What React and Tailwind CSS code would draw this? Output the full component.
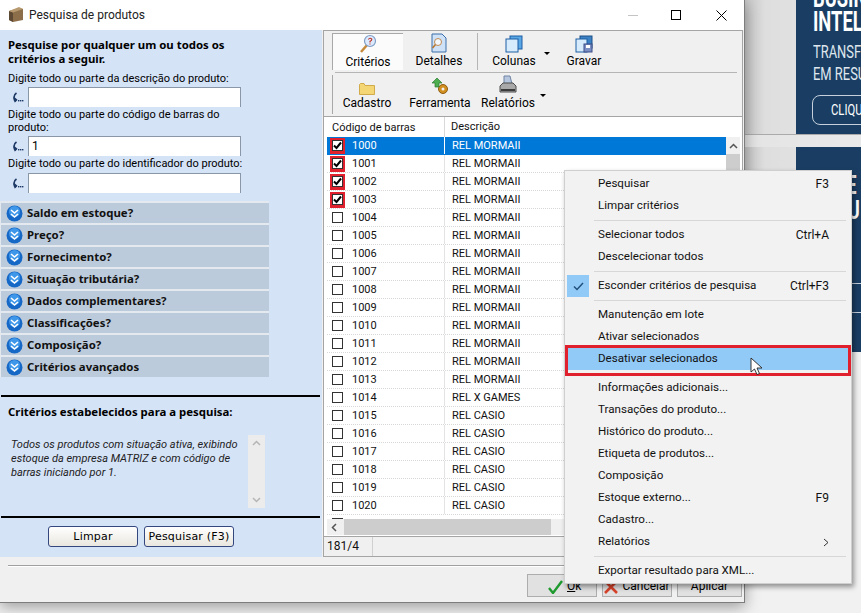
import React from 'react'

const sections = ['Saldo em estoque?', 'Preço?', 'Fornecimento?', 'Situação tributária?', 'Dados complementares?', 'Classificações?', 'Composição?', 'Critérios avançados']

const rows = []
for (let i = 0; i <= 20; i++) {
  let desc = 'REL MORMAII'
  if (i === 14) desc = 'REL X GAMES'
  if (i > 14) desc = 'REL CASIO'
  rows.push({ code: String(1000 + i), desc, checked: i < 4, selected: i === 0 })
}

const menu = [
  { label: 'Pesquisar', key: 'F3' },
  { label: 'Limpar critérios' },
  { sep: true },
  { label: 'Selecionar todos', key: 'Ctrl+A' },
  { label: 'Descelecionar todos' },
  { sep: true },
  { label: 'Esconder critérios de pesquisa', key: 'Ctrl+F3', checked: true },
  { sep: true },
  { label: 'Manutenção em lote' },
  { label: 'Ativar selecionados' },
  { label: 'Desativar selecionados', active: true },
  { sep: true },
  { label: 'Informações adicionais...' },
  { label: 'Transações do produto...' },
  { label: 'Histórico do produto...' },
  { label: 'Etiqueta de produtos...' },
  { label: 'Composição' },
  { label: 'Estoque externo...', key: 'F9' },
  { label: 'Cadastro...' },
  { label: 'Relatórios', arrow: true },
  { sep: true },
  { label: 'Exportar resultado para XML...' },
]

function SearchGlyph() {
  return (
    <svg width="12" height="11" viewBox="0 0 12 11" className="shrink-0">
      <path d="M4.5 1 C1.5 3 1.5 6.5 3.5 10 M1.5 5.5 L5 8.5" fill="none" stroke="#1d3a66" strokeWidth="1.7" />
      <rect x="6" y="8" width="1.4" height="1.4" fill="#1d3a66" />
      <rect x="8" y="8" width="1.4" height="1.4" fill="#1d3a66" />
      <rect x="10" y="8" width="1.4" height="1.4" fill="#1d3a66" />
    </svg>
  )
}

function SearchField({ value }) {
  return (
    <div className="flex items-center h-5">
      <div className="w-[28px] pl-[12px]"><SearchGlyph /></div>
      <div className="w-[213px] h-5 bg-white border-x border-t border-[#8a97a8] pl-[3px] text-[12px] leading-[19px] text-black">{value}</div>
    </div>
  )
}

function SectionIcon() {
  return (
    <svg width="17" height="17" viewBox="0 0 17 17" className="shrink-0">
      <circle cx="8.5" cy="8.5" r="8" fill="#1668c7" />
      <circle cx="8.5" cy="6.5" r="5.5" fill="#3f97ea" />
      <path d="M5 5 L8.5 8 L12 5 M5 9 L8.5 12 L12 9" fill="none" stroke="#fff" strokeWidth="1.6" />
    </svg>
  )
}

function FormButton({ children }) {
  return (
    <button className="w-[90px] h-[21px] rounded-[3px] border border-[#34477f] bg-gradient-to-b from-white to-[#e9e7df] font-['DejaVu_Sans',sans-serif] text-[11px] leading-[19px] tracking-[0.2px] text-black">
      {children}
    </button>
  )
}

function CriteriaIcon() {
  return (
    <svg width="20" height="20" viewBox="0 0 20 20">
      <path d="M9 11 L3 18" stroke="#c68a3c" strokeWidth="2.5" />
      <circle cx="12" cy="7" r="5.5" fill="#dbeafe" stroke="#7f9cc4" strokeWidth="1.2" />
      <path d="M10.3 5.5 Q12 3.2 13.8 5.2 Q13.8 6.6 12 7.4 L12 8.4 M12 9.4 L12 10.4" fill="none" stroke="#c0392b" strokeWidth="1.2" />
    </svg>
  )
}

function DetailsIcon() {
  return (
    <svg width="20" height="20" viewBox="0 0 20 20">
      <path d="M3 1 H13 L17 5 V19 H3 Z" fill="#cfe1f7" stroke="#3a6ea8" />
      <circle cx="9" cy="9" r="3.5" fill="#f2f7fd" stroke="#c18a4e" />
      <path d="M6.5 11.5 L3.5 15" stroke="#b9772f" strokeWidth="1.6" />
    </svg>
  )
}

function ColumnsIcon() {
  return (
    <svg width="18" height="18" viewBox="0 0 18 18">
      <rect x="5" y="1" width="12" height="13" fill="#5aa7e6" stroke="#1d5fa4" />
      <rect x="1" y="4" width="12" height="13" fill="#d6ebfb" stroke="#1d5fa4" />
    </svg>
  )
}

function SaveIcon() {
  return (
    <svg width="18" height="18" viewBox="0 0 18 18">
      <rect x="5" y="1" width="12" height="12" fill="#3d82c4" stroke="#1d4f86" />
      <rect x="1" y="4" width="11" height="13" fill="#d6ebfb" stroke="#1d5fa4" />
      <rect x="9" y="9" width="8" height="8" fill="#7b8fc4" stroke="#3b4d88" />
      <rect x="11" y="10" width="4" height="3" fill="#fff" />
    </svg>
  )
}

function FolderIcon() {
  return (
    <svg width="16" height="12" viewBox="0 0 16 12">
      <path d="M0.5 1.5 V11.5 H15.5 V2.5 H6 L5 0.5 H1.5 Z" fill="#f4d675" stroke="#d1ab4b" />
    </svg>
  )
}

function ToolIcon() {
  return (
    <svg width="18" height="18" viewBox="0 0 18 18">
      <circle cx="12" cy="12" r="4.5" fill="#d18f1f" stroke="#8f5d12" />
      <circle cx="12" cy="12" r="1.5" fill="#f0f0f0" />
      <path d="M1 6 L6 1 L11 6 L8 6 L8 10 L4 10 L4 6 Z" fill="#4cae4f" stroke="#2b7a30" strokeWidth="0.7" />
    </svg>
  )
}

function PrinterIcon() {
  return (
    <svg width="18" height="20" viewBox="0 0 18 20">
      <path d="M5 1 H11 L13 9 H5 Z" fill="#b6c6de" stroke="#6f83a3" />
      <path d="M1 11 L4 8 H14 L17 11 V17 H1 Z" fill="#a9a9a9" stroke="#4d4d4d" />
      <rect x="2" y="14" width="14" height="2" fill="#3b3b3b" />
    </svg>
  )
}

function ToolButton({ icon, label, className }) {
  return (
    <div className={`flex flex-col items-center h-[37px] ${className}`}>
      <div className="h-[20px] flex items-end justify-center">{icon}</div>
      <span className="mt-px text-[12px] leading-[15px] text-black whitespace-nowrap">{label}</span>
    </div>
  )
}

function DropArrow({ className }) {
  return <span className={`w-0 h-0 border-x-[3px] border-x-transparent border-t-[3px] border-t-black ${className}`} />
}

function TableCheck({ checked }) {
  return (
    <div className={`w-[15px] h-[16px] flex items-center justify-center ${checked ? 'bg-[#e0202c]' : ''}`}>
      <div className="w-[11px] h-[11px] bg-white border border-[#333] flex items-center justify-center">
        {checked && (
          <svg width="9" height="9" viewBox="0 0 9 9">
            <path d="M1 4.5 L3.5 7 L8 1.5" fill="none" stroke="#000" strokeWidth="2" />
          </svg>
        )}
      </div>
    </div>
  )
}

export default function App() {
  return (
    <div className="relative w-[861px] h-[613px] overflow-hidden flex bg-[#f1f1f1] font-['Roboto',sans-serif]">
      <div className="w-[745px] h-[603px] shrink-0 flex flex-col bg-[#f0f0f0] border-r border-b border-[#7d7d7d] shadow-[0_4px_14px_rgba(0,0,0,0.35)] z-10">
        {/* title bar */}
        <div className="h-[30px] shrink-0 bg-white flex items-center">
          <svg width="16" height="17" viewBox="0 0 16 17" className="ml-[8px] -mt-[1px]">
            <path d="M1 5 L11 2 L15 3 V14 L5 16 L1 14 Z" fill="#8d6e4a" />
            <path d="M1 5 L5 6.5 V16 L1 14 Z" fill="#5e4a34" />
            <path d="M5 6.5 L15 3 L11 1 L1 5 Z" fill="#b89a70" />
          </svg>
          <span className="ml-[5px] text-[12px] text-[#222]">Pesquisa de produtos</span>
          <div className="ml-auto flex items-center">
            <span className="w-[10px] h-px bg-[#c4c4c4] mr-[33px]" />
            <span className="w-[10px] h-[10px] border border-black mr-[35px]" />
            <svg width="11" height="11" viewBox="0 0 11 11" className="mr-[17px]">
              <path d="M0.5 0.5 L10.5 10.5 M10.5 0.5 L0.5 10.5" stroke="#000" />
            </svg>
          </div>
        </div>

        <div className="flex h-[527px] shrink-0">
          {/* left panel */}
          <div className="w-[322px] shrink-0 bg-[#d5e3f7] flex flex-col text-black">
            <div className="pl-2 pt-2 text-[11.4px] leading-[14px] font-bold font-['Noto_Sans',sans-serif]">
              Pesquise por qualquer um ou todos os<br />critérios a seguir.
            </div>
            <div className="pl-2 mt-[6px] mb-px text-[11px] leading-[14px]">Digite todo ou parte da descrição do produto:</div>
            <SearchField />
            <div className="pl-2 pt-px mb-[2px] text-[11px] leading-[13px] w-[240px]">Digite todo ou parte do código de barras do produto:</div>
            <SearchField value="1" />
            <div className="pl-2 pt-px mb-[3px] text-[11px] leading-[13px]">Digite todo ou parte do identificador do produto:</div>
            <SearchField />

            <div className="mt-2 w-[269px] flex flex-col">
              {sections.map((s) => (
                <div key={s} className="h-[22px] bg-[#bccbdc] border-t-2 border-[#e4e9ef] border-l border-l-[#e4e9ef] flex items-center pl-[5px] gap-[4px]">
                  <SectionIcon />
                  <span className="-mt-px text-[11.4px] font-bold font-['Noto_Sans',sans-serif] text-[#111]">{s}</span>
                </div>
              ))}
            </div>

            <div className="mt-[18px] ml-px w-[319px] h-[2px] bg-black" />
            <div className="pl-2 mt-[8px] text-[11.4px] leading-[14px] font-bold font-['Noto_Sans',sans-serif]">Critérios estabelecidos para a pesquisa:</div>
            <div className="flex mt-[16px] h-[73px]">
              <p className="w-[248px] pl-[11px] pr-[6px] pt-[3px] text-[11px] leading-[14px] italic text-[#222]">
                Todos os produtos com situação ativa, exibindo estoque da empresa MATRIZ e com código de barras iniciando por 1.
              </p>
              <div className="w-[17px] bg-[#ececec] flex flex-col items-center justify-between py-[5px] text-[#b5b5b5]">
                <svg width="9" height="6" viewBox="0 0 9 6"><path d="M1 5 L4.5 1.5 L8 5" fill="none" stroke="currentColor" strokeWidth="1.5" /></svg>
                <svg width="9" height="6" viewBox="0 0 9 6"><path d="M1 1 L4.5 4.5 L8 1" fill="none" stroke="currentColor" strokeWidth="1.5" /></svg>
              </div>
            </div>
            <div className="mt-2 ml-px w-[319px] h-[2px] bg-black" />
            <div className="mt-[8px] pl-[48px] flex gap-[6px]">
              <FormButton>Limpar</FormButton>
              <FormButton>Pesquisar (F3)</FormButton>
            </div>
          </div>

          {/* right panel */}
          <div className="flex-1 flex flex-col ml-px mr-px min-w-0">
            <div className="h-[87px] shrink-0 border border-[#a5a5a5] bg-[#f0f0f0] pt-[2px] pl-[8px]">
              <div className="flex items-start h-[38px]">
                <ToolButton className="w-[71px] border-l border-t border-[#a8a8a8] bg-white/70" icon={<CriteriaIcon />} label="Critérios" />
                <ToolButton className="w-[72px]" icon={<DetailsIcon />} label="Detalhes" />
                <span className="w-px h-[37px] bg-[#b5b5b5] ml-[2px]" />
                <ToolButton className="w-[72px]" icon={<ColumnsIcon />} label="Colunas" />
                <DropArrow className="-ml-[6px] mt-[19px]" />
                <ToolButton className="w-[58px] ml-[5px]" icon={<SaveIcon />} label="Gravar" />
              </div>
              <div className="h-px bg-[#b5b5b5] ml-[3px] mr-[5px] mt-px" />
              <div className="flex items-start h-[39px] mt-[2px] border-l border-[#a8a8a8] pl-[3px]">
                <ToolButton className="w-[62px]" icon={<FolderIcon />} label="Cadastro" />
                <ToolButton className="w-[64px] ml-[10px]" icon={<ToolIcon />} label="Ferramenta" />
                <ToolButton className="w-[64px] ml-[4px]" icon={<PrinterIcon />} label="Relatórios" />
                <DropArrow className="mt-[19px]" />
              </div>
            </div>

            <div className="flex-1 min-h-0 bg-white border-x border-[#a5a5a5] pl-[3px] pr-[2px] flex flex-col text-[11px] text-[#111]">
              <div className="h-[20px] shrink-0 flex items-center">
                <span className="w-[118px] pl-[5px] pt-px border-r border-[#d9d9d9] leading-[20px]">Código de barras</span>
                <span className="pl-[6px] pt-px">Descrição</span>
              </div>
              <div className="flex h-[382px] shrink-0 overflow-hidden">
                <div className="w-[399px] shrink-0">
                  {rows.map((r) => (
                    <div key={r.code} className={`h-[18px] flex items-center border-b border-dotted ${r.selected ? 'bg-[#0078d7] text-white border-[#0078d7]' : 'border-[#d8d8d8]'}`}>
                      <div className={`w-[118px] h-full flex items-center pl-[3px] border-r ${r.selected ? 'border-white' : 'border-[#e3e3e3]'}`}>
                        <TableCheck checked={r.checked} />
                        <span className="ml-[7px] pt-[2px]">{r.code}</span>
                      </div>
                      <span className="pl-[7px] pt-[2px]">{r.desc}</span>
                    </div>
                  ))}
                  <div className="h-[5px] pl-[5px] pt-[3px]"><div className="w-[11px] h-[11px] border border-[#333]" /></div>
                </div>
                <div className="flex-1 bg-[#f0f0f0] flex flex-col">
                  <div className="h-[17px] flex items-center justify-center">
                    <svg width="9" height="6" viewBox="0 0 9 6"><path d="M1 5 L4.5 1.5 L8 5" fill="none" stroke="#555" strokeWidth="1.5" /></svg>
                  </div>
                  <div className="flex-1 bg-[#cdcdcd]" />
                </div>
              </div>
              <div className="h-[16px] shrink-0 bg-[#f0f0f0] flex items-center">
                <svg width="16" height="9" viewBox="0 0 16 9" className="shrink-0"><path d="M9 1 L5.5 4.5 L9 8" fill="none" stroke="#555" strokeWidth="1.5" /></svg>
                <div className="ml-px w-[207px] h-full bg-[#cdcdcd]" />
              </div>
            </div>

            <div className="h-[21px] shrink-0 border border-[#a5a5a5] bg-[#f0f0f0] flex text-[12px] leading-[19px] text-[#111]">
              <span className="w-[49px] pl-[3px] border-r border-[#d0d0d0]">181/4</span>
            </div>
          </div>
        </div>

        {/* bottom bar */}
        <div className="flex-1 flex flex-col">
          <div className="mt-[8px] ml-[8px] h-[2px] border-t border-[#a0a0a0] bg-white" />
          <div className="mt-[7px] pl-[527px] flex gap-[5px]">
            <button className="w-[70px] h-[23px] bg-[#e1e1e1] border border-[#adadad] flex items-center pl-[20px] text-[12px]">
              <svg width="15" height="14" viewBox="0 0 15 14" className="mt-[3px] mr-[4px]"><path d="M1 8 L5 13 L14 1" fill="none" stroke="#1e9a2f" strokeWidth="2.4" /></svg>
              <span className="underline">O</span>k
            </button>
            <button className="w-[70px] h-[23px] bg-[#e1e1e1] border border-[#adadad] flex items-center justify-center gap-1 text-[12px]">
              <svg width="14" height="14" viewBox="0 0 14 14" className="mt-[3px]"><path d="M1 1 L13 13 M13 1 L1 13" stroke="#d8432b" strokeWidth="2.6" /></svg>
              Cancelar
            </button>
            <button className="w-[65px] h-[23px] bg-[#e1e1e1] border border-[#adadad] flex items-center justify-center text-[12px]">Aplicar</button>
          </div>
        </div>
      </div>

      {/* page behind the window */}
      <div className="flex-1 flex flex-col">
        <div className="h-[134px] flex">
          <div className="w-[51px] bg-gradient-to-r from-[#c6c6c6] via-[#dedede] via-40% to-[#e1e1e1]" />
          <div className="flex-1 overflow-hidden bg-[#1a3e63] text-white pl-[17px] font-['Roboto',sans-serif] font-bold whitespace-nowrap">
            <div className="text-[27px] leading-[24px] -mt-[14px] w-[200px] origin-left scale-x-[0.68]">BUSINESS<br />INTELIGENCE</div>
            <div className="text-[19px] leading-[22px] mt-[7px] w-[200px] origin-left scale-x-[0.68] font-normal text-[#dfe6ee]">TRANSFORME<br />EM RESULTADO</div>
            <div className="mt-[10px] -ml-px w-[90px] h-[30px] border border-[#c5d0dc] rounded-[8px] pl-[18px] leading-[28px] text-[15px] font-normal">
              <div className="origin-left scale-x-[0.75]">CLIQUE</div>
            </div>
          </div>
        </div>
        <div className="h-[13px] border-t border-[#aaa] bg-gradient-to-r from-[#e4e4e4] to-[#f1f1f1]" />
        <div className="h-[205px] flex">
          <div className="w-[51px] bg-gradient-to-r from-[#c6c6c6] via-[#dedede] via-40% to-[#e1e1e1]" />
          <div className="flex-1 overflow-hidden bg-[#1a3e63] text-white font-['Roboto',sans-serif] font-bold whitespace-nowrap pl-[39px]">
            <div className="mt-[26px] text-[26px] leading-[25px] origin-left scale-x-[0.7]">TE<br />NU</div>
            <div className="mt-[8px] text-[17px] leading-[20px] font-normal origin-left scale-x-[0.7]">BA<br />EM</div>
            <div className="mt-[12px] border-y border-[#c5d0dc] h-[30px] text-[14px] leading-[28px] font-normal">IQ</div>
          </div>
        </div>
      </div>

      {/* context menu */}
      <div className="absolute z-20 left-[564px] top-[170px] w-[288px] h-[414px] pt-[2px] bg-[#f2f2f2] border border-[#cfcfcf] shadow-[2px_3px_5px_rgba(0,0,0,0.4)] text-[11.6px] text-[#111]">
        {menu.map((m, i) => m.sep ? (
          <div key={i} className="h-[7px] flex items-center pl-[29px] pr-[5px]"><div className="h-px w-full bg-[#d7d7d7]" /></div>
        ) : (
          <div key={i} className={`h-[22px] flex items-center relative ${m.active ? 'bg-[#91c9f7] mx-px pl-[32px] pr-[20px]' : 'pl-[33px] pr-[22px]'}`}>
            {m.checked && (
              <div className="absolute left-[2px] top-0 w-[22px] h-[22px] bg-[#91c9f7] flex items-center justify-center">
                <svg width="11" height="9" viewBox="0 0 11 9"><path d="M1 4.5 L4 7.5 L10 1" fill="none" stroke="#1f4e79" strokeWidth="1.4" /></svg>
              </div>
            )}
            <span>{m.label}</span>
            {m.key && <span className="ml-auto text-[12px]">{m.key}</span>}
            {m.arrow && (
              <svg width="6" height="9" viewBox="0 0 6 9" className="ml-auto"><path d="M1 1 L5 4.5 L1 8" fill="none" stroke="#333" /></svg>
            )}
          </div>
        ))}
      </div>

      {/* red highlight and cursor over the menu */}
      <div className="absolute z-30 left-[565px] top-[345px] w-[286px] h-[31px] border-[3px] border-[#e0202c]" />
      <svg width="13" height="19" viewBox="0 0 13 19" className="absolute z-30 left-[750px] top-[357px]">
        <path d="M1 1 V15 L4.5 12 L7 17.5 L9.5 16.5 L7 11 L12 11 Z" fill="#fff" stroke="#222" strokeWidth="0.9" />
      </svg>
    </div>
  )
}
